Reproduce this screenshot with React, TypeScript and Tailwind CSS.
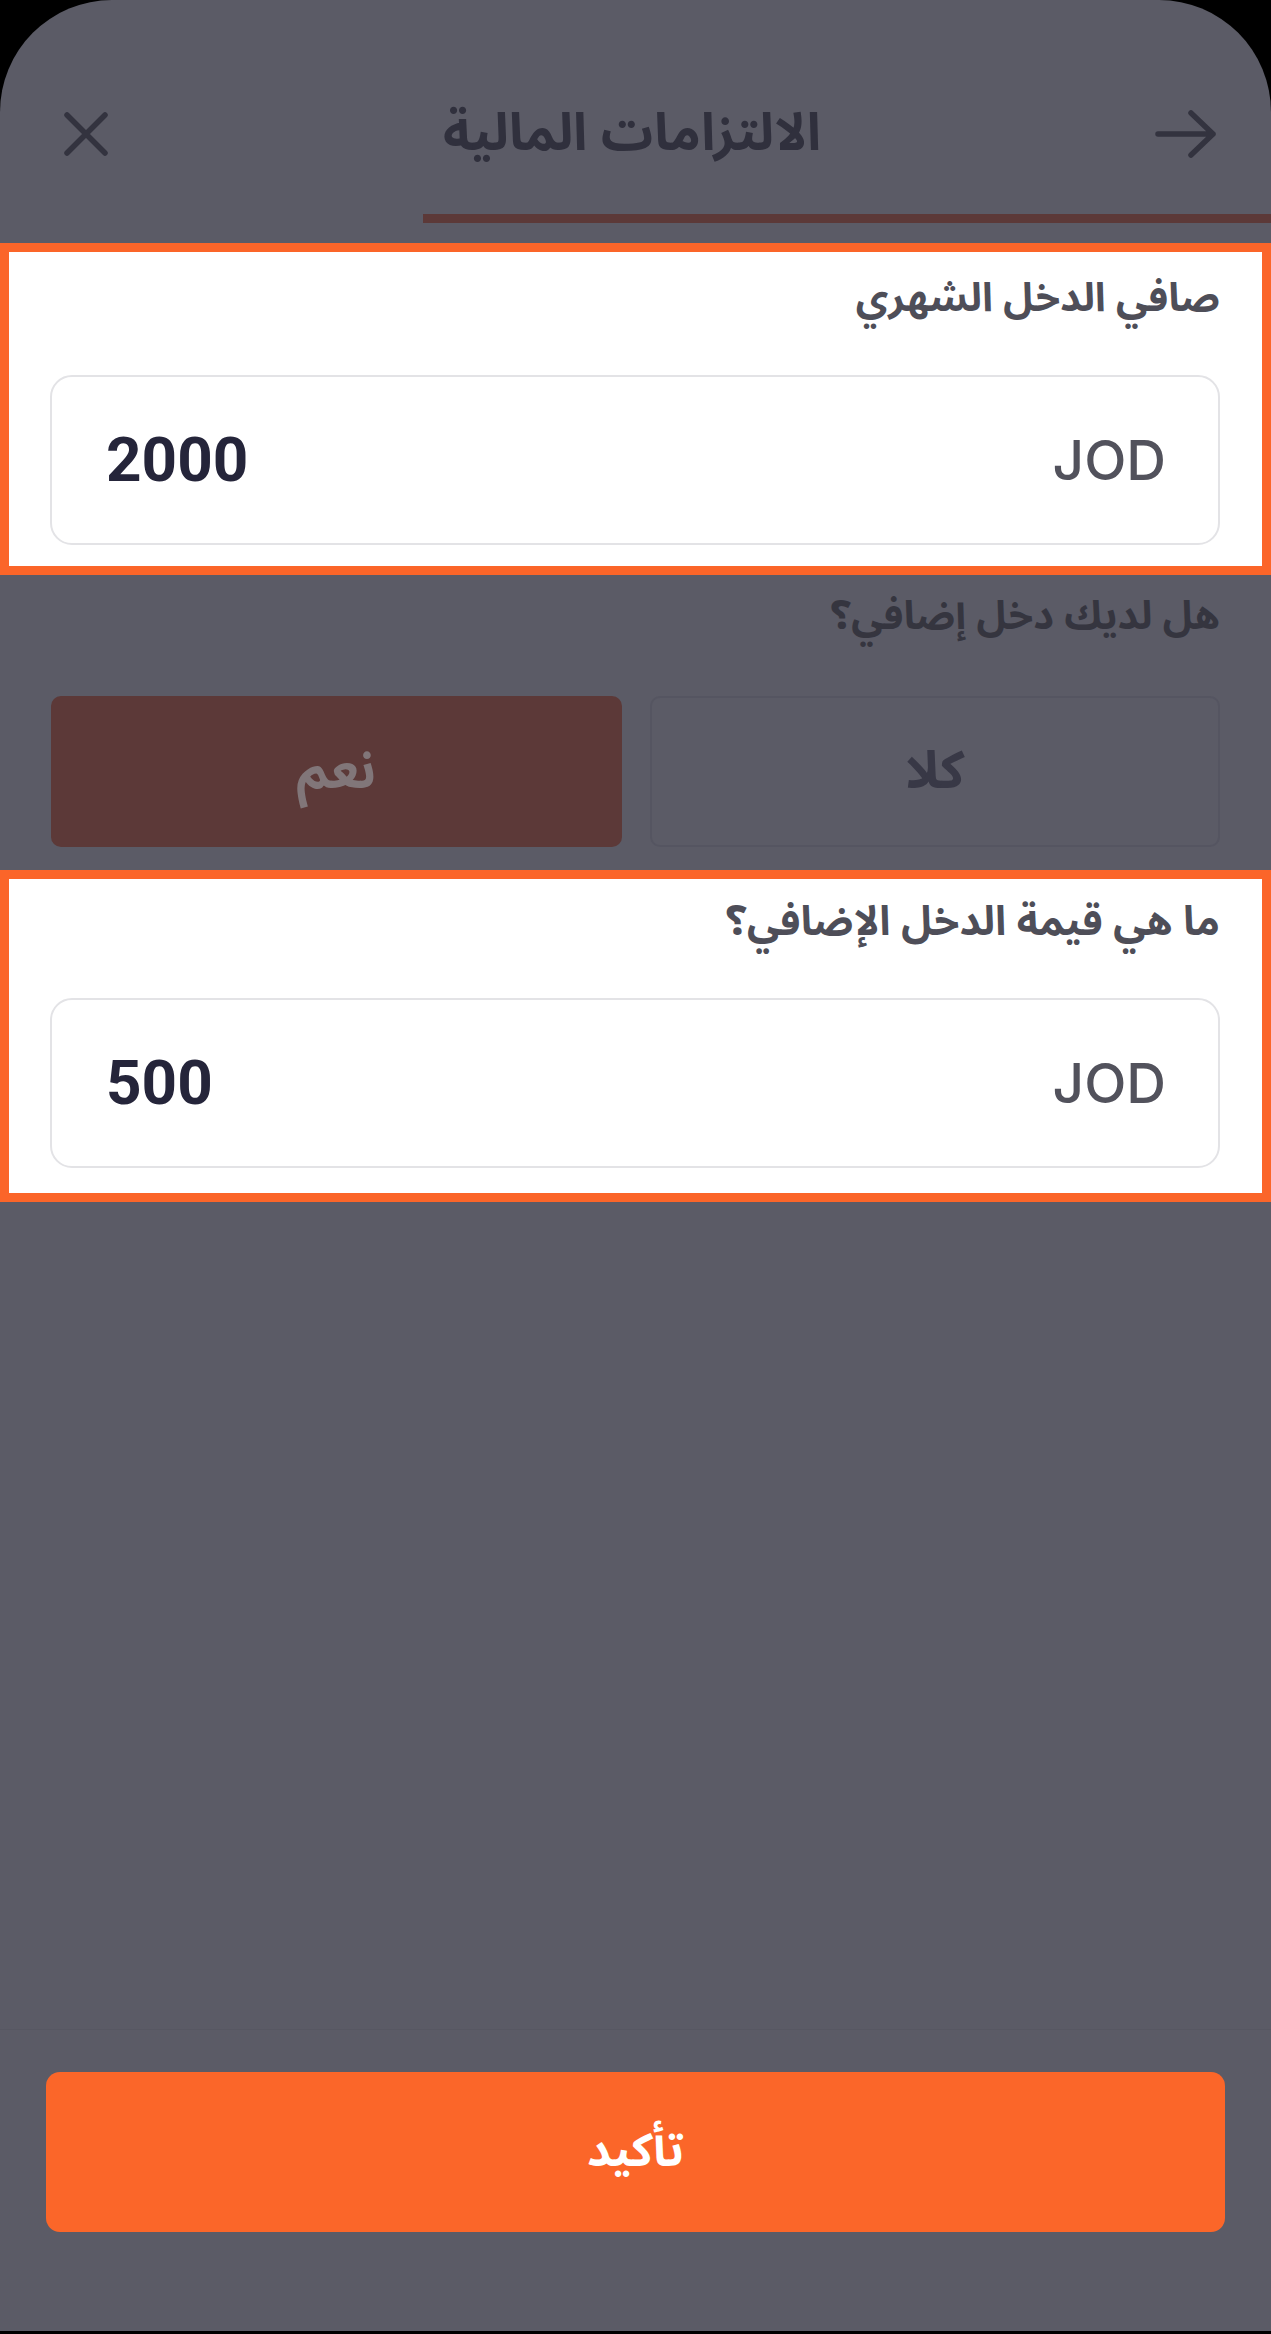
import React from "react";

const arabic = "font-['Noto_Sans_Arabic','DejaVu_Sans',sans-serif]";
const latin = "font-['Inter','Roboto',sans-serif]";
const digits = "font-['Roboto','Inter',sans-serif]";

function CloseIcon() {
  return (
    <svg width="46" height="46" viewBox="0 0 46 46" fill="none">
      <path d="M4 4L42 42M42 4L4 42" stroke="#33333f" strokeWidth="5.5" strokeLinecap="round" />
    </svg>
  );
}

function ArrowIcon() {
  return (
    <svg width="62" height="48" viewBox="0 0 62 48" fill="none">
      <path
        d="M3 24H58M36 3L58 24L36 45"
        stroke="#33333f"
        strokeWidth="5.5"
        strokeLinecap="round"
        strokeLinejoin="round"
      />
    </svg>
  );
}

function AmountInput({ value }: { value: string }) {
  return (
    <div className="h-[170px] rounded-[22px] border-2 border-[#e3e3e6] bg-white flex items-center justify-between pr-[52px] pl-[54px]">
      <span className={`${latin} text-[55px] font-medium text-[#52525c] leading-none`}>JOD</span>
      <span className={`${digits} text-[62px] font-bold text-[#25253a] leading-none`} dir="ltr">
        {value}
      </span>
    </div>
  );
}

export default function App() {
  return (
    <div className="w-[1271px] h-[2334px] bg-black" dir="rtl">
      <div className="h-[2331px] bg-[#5b5b66] rounded-t-[112px] flex flex-col overflow-hidden">
        {/* header */}
        <div className="pt-[110px]">
          <div className="h-[48px] flex items-center justify-between pr-[54px] pl-[63px]">
            <ArrowIcon />
            <h1 className={`${arabic} text-[52px] font-bold text-[#30303d] leading-none`}>الالتزامات المالية</h1>
            <CloseIcon />
          </div>
          <div className="mt-[56px] h-[9px] w-[848px] bg-[#5c3938]" />
        </div>

        {/* monthly income (highlighted) */}
        <div className="mt-[20px] h-[332px] border-[9px] border-[#fb6529] bg-white pr-[42px] pl-[41px] pt-[19px]">
          <p className={`${arabic} text-[40px] font-bold text-[#4e4e58] leading-[56px]`}>صافي الدخل الشهري</p>
          <div className="mt-[48px]">
            <AmountInput value="2000" />
          </div>
        </div>

        {/* extra income question (dimmed) */}
        <div className="h-[295px] px-[51px] pt-[14px]">
          <p className={`${arabic} text-[40px] font-bold text-[#35353f] leading-[56px]`}>هل لديك دخل إضافي؟</p>
          <div className="mt-[51px] grid grid-cols-2 gap-[28px]">
            <div className="h-[151px] rounded-[10px] border-2 border-[#555561] flex items-center justify-center">
              <span className={`${arabic} text-[52px] font-bold text-[#383846] leading-none`}>كلا</span>
            </div>
            <div className="h-[151px] rounded-[10px] bg-[#5c3938] flex items-center justify-center">
              <span className={`${arabic} text-[52px] font-bold text-[#817679] leading-none`}>نعم</span>
            </div>
          </div>
        </div>

        {/* extra income amount (highlighted) */}
        <div className="h-[332px] border-[9px] border-[#fb6529] bg-white pr-[42px] pl-[41px] pt-[15px]">
          <p className={`${arabic} text-[41px] font-bold text-[#4e4e58] leading-[56px]`}>ما هي قيمة الدخل الإضافي؟</p>
          <div className="mt-[48px]">
            <AmountInput value="500" />
          </div>
        </div>

        <div className="flex-1" />

        {/* footer */}
        <div className="h-[302px] border-t border-[#575762] px-[46px] pt-[42px]">
          <button className="w-full h-[160px] rounded-[14px] bg-[#fb6629] flex items-center justify-center">
            <span className={`${arabic} text-[46px] font-bold text-white leading-none`}>تأكيد</span>
          </button>
        </div>
      </div>
    </div>
  );
}
